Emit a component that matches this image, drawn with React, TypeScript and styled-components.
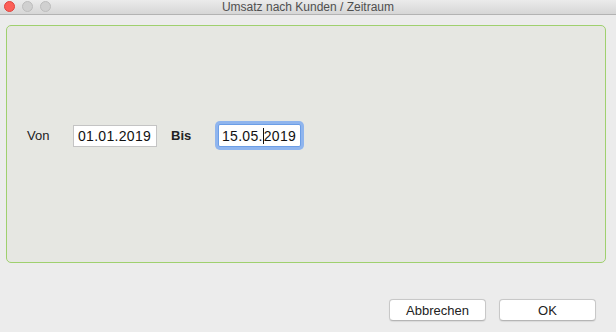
import styled, { createGlobalStyle } from "styled-components";

const GlobalStyle = createGlobalStyle`
  html, body {
    margin: 0;
    padding: 0;
    background: #ececec;
    font-family: "Liberation Sans", Arial, sans-serif;
  }
`;

const Window = styled.div`
  width: 616px;
  height: 332px;
  display: flex;
  flex-direction: column;
  background: #ececec;
  overflow: hidden;
`;

const TitleBar = styled.div`
  position: relative;
  height: 14px;
  display: flex;
  align-items: center;
  justify-content: center;
  background: linear-gradient(#ebebeb, #d6d6d6);
  border-bottom: 1px solid #b3b3b3;
  flex-shrink: 0;
`;

const Lights = styled.div`
  position: absolute;
  left: 4px;
  top: 1px;
  display: flex;
  gap: 7px;
`;

const Light = styled.span<{ $color: string; $edge: string }>`
  width: 11px;
  height: 11px;
  border-radius: 50%;
  background: ${(p) => p.$color};
  box-sizing: border-box;
  border: 1px solid ${(p) => p.$edge};
`;

const Title = styled.span`
  font-size: 12px;
  color: #4f4f4f;
  line-height: 14px;
`;

const Panel = styled.div`
  margin: 10px 10px 0 6px;
  height: 238px;
  box-sizing: border-box;
  border: 1px solid #9fd06e;
  border-radius: 5px;
  background: #e6e7e2;
  padding: 95px 0 0 20px;
`;

const Row = styled.div`
  display: flex;
  align-items: center;
  height: 29px;
`;

const Label = styled.span<{ $bold?: boolean; $width: number }>`
  font-size: 13px;
  color: #222;
  font-weight: ${(p) => (p.$bold ? 700 : 400)};
  width: ${(p) => p.$width}px;
`;

const DateField = styled.div<{ $focused?: boolean }>`
  box-sizing: border-box;
  width: ${(p) => (p.$focused ? 83 : 84)}px;
  height: ${(p) => (p.$focused ? 23 : 22)}px;
  background: #fff;
  border: 1px solid ${(p) => (p.$focused ? "#6c9ee6" : "#c4c4c4")};
  box-shadow: ${(p) => (p.$focused ? "0 0 0 3px #8fb5ee" : "none")};
  border-radius: ${(p) => (p.$focused ? 2 : 0)}px;
  font-size: 14px;
  color: #111;
  padding-left: ${(p) => (p.$focused ? 3 : 4)}px;
  display: flex;
  align-items: center;
  letter-spacing: 0.3px;
  margin-right: ${(p) => (p.$focused ? 0 : 14)}px;
  margin-left: ${(p) => (p.$focused ? 6 : 0)}px;
`;

const Caret = styled.span`
  display: inline-block;
  width: 1px;
  height: 16px;
  background: #111;
  vertical-align: middle;
`;

const Footer = styled.div`
  display: flex;
  justify-content: flex-end;
  gap: 13px;
  padding: 36px 20px 0 0;
`;

const Button = styled.button`
  width: 97px;
  height: 22px;
  background: #fff;
  border: 1px solid #c8c8c8;
  border-bottom-color: #b5b5b5;
  border-radius: 4px;
  font-family: "Liberation Sans", Arial, sans-serif;
  font-size: 13px;
  color: #222;
  padding: 0;
  box-shadow: 0 0.5px 1px rgba(0, 0, 0, 0.08);
`;

const App = () => {
  return (
    <Window>
      <GlobalStyle />
      <TitleBar>
        <Lights>
          <Light $color="#fc5f57" $edge="#e0443e" />
          <Light $color="#d0d0d0" $edge="#bdbdbd" />
          <Light $color="#d0d0d0" $edge="#bdbdbd" />
        </Lights>
        <Title>Umsatz nach Kunden / Zeitraum</Title>
      </TitleBar>
      <Panel>
        <Row>
          <Label $width={46}>Von</Label>
          <DateField>01.01.2019</DateField>
          <Label $bold $width={41}>Bis</Label>
          <DateField $focused>
            15.05.<Caret />2019
          </DateField>
        </Row>
      </Panel>
      <Footer>
        <Button>Abbrechen</Button>
        <Button>OK</Button>
      </Footer>
    </Window>
  );
};

export default App;
